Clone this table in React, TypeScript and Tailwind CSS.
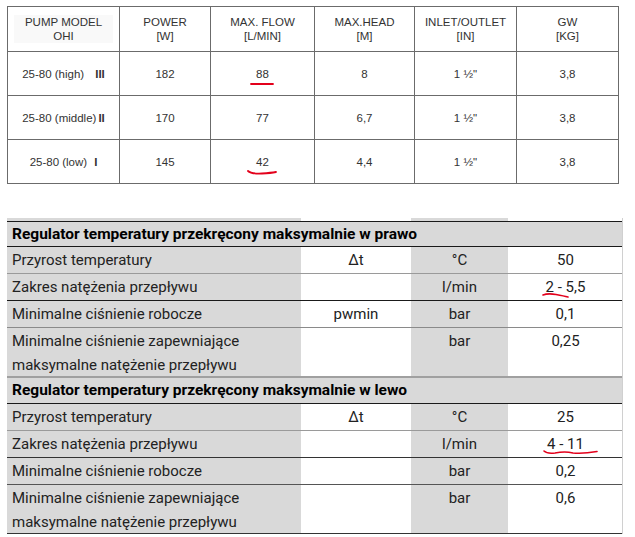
import React from 'react';

type PumpRow = { model: string; speed: string; power: string; flow: string; head: string; inlet: string; gw: string; mark?: 'straight' | 'curve' };

const pumpRows: PumpRow[] = [
  { model: '25-80 (high)', speed: 'III', power: '182', flow: '88', head: '8', inlet: '1 ½"', gw: '3,8', mark: 'straight' },
  { model: '25-80 (middle)', speed: 'II', power: '170', flow: '77', head: '6,7', inlet: '1 ½"', gw: '3,8' },
  { model: '25-80 (low)', speed: 'I', power: '145', flow: '42', head: '4,4', inlet: '1 ½"', gw: '3,8', mark: 'curve' },
];

const headers = [
  ['PUMP MODEL', 'OHI'],
  ['POWER', '[W]'],
  ['MAX. FLOW', '[L/MIN]'],
  ['MAX.HEAD', '[M]'],
  ['INLET/OUTLET', '[IN]'],
  ['GW', '[KG]'],
];

const widths = ['w-[112px]', 'w-[91px]', 'w-[104px]', 'w-[100px]', 'w-[102px]', 'w-[102px]'];

const Underline: React.FC<{ d: string; w: number }> = ({ d, w }) => (
  <svg className="absolute left-1/2 -translate-x-1/2 top-full" width={w} height="8" viewBox={`0 0 ${w} 8`}>
    <path d={d} stroke="#e3001b" strokeWidth="1.8" fill="none" strokeLinecap="round" />
  </svg>
);

const PumpTable: React.FC = () => (
  <table className="border-collapse ml-[7px] mt-[6px] text-[11.5px] text-[#333] font-['Liberation_Sans',Arial,sans-serif] leading-[14px]">
    <thead>
      <tr className="h-[45px]">
        {headers.map((h, i) => (
          <th key={i} className={`border border-[#6b6b6b] font-normal text-center align-middle ${widths[i]}`}>
            <div className={i === 0 ? 'mx-[6px] bg-[#f9f9f9]' : ''}>
              {h[0]}
              <br />
              {h[1]}
            </div>
          </th>
        ))}
      </tr>
    </thead>
    <tbody>
      {pumpRows.map((r, i) => (
        <tr key={i} className="h-[44px] text-center">
          <td className="border border-[#6b6b6b]">
            {r.model}
            <span className={i === 0 ? 'ml-[11px] font-bold' : i === 1 ? 'ml-[2px] font-bold' : 'ml-[7px] font-bold'}>{r.speed}</span>
          </td>
          <td className="border border-[#6b6b6b]">{r.power}</td>
          <td className="border border-[#6b6b6b]">
            <span className="relative inline-block">
              {r.flow}
              {r.mark === 'straight' && <Underline w={26} d="M2 3 L24 3" />}
              {r.mark === 'curve' && <Underline w={30} d="M1 2 Q4 5 15 4.5 Q24 4 29 3" />}
            </span>
          </td>
          <td className="border border-[#6b6b6b]">{r.head}</td>
          <td className="border border-[#6b6b6b]">{r.inlet}</td>
          <td className="border border-[#6b6b6b]">{r.gw}</td>
        </tr>
      ))}
    </tbody>
  </table>
);

type SpecRow = { label: string[]; sym?: string; unit: string; value: string; line: string; mark?: 'a' | 'b' };

const Row: React.FC<{ r: SpecRow }> = ({ r }) => {
  const tall = r.label.length > 1;
  return (
    <div className={`grid grid-cols-[294px_110px_97px_115px] ${r.line}`}>
      <div className={`bg-[#d9d9d9] pl-[5px] ${tall ? 'h-[48px] pt-[1px] leading-[24px]' : 'h-[26px] leading-[26px]'}`}>
        {r.label.map((l, i) => (
          <div key={i}>{l}</div>
        ))}
      </div>
      <div className={`text-center ${tall ? 'leading-[24px] pt-[1px]' : 'leading-[26px]'}`}>{r.sym}</div>
      <div className={`bg-[#d9d9d9] text-center ${tall ? 'leading-[24px] pt-[1px]' : 'leading-[26px]'}`}>{r.unit}</div>
      <div className={`text-center ${tall ? 'leading-[24px] pt-[1px]' : 'leading-[26px]'}`}>
        <span className="relative inline-block">
          {r.value}
          {r.mark === 'a' && (
            <svg className="absolute -left-[4px] top-[17px]" width="30" height="8" viewBox="0 0 30 8">
              <path d="M1 4 Q6 2 14 3.5 Q22 5 26 6" stroke="#e3001b" strokeWidth="1.6" fill="none" strokeLinecap="round" />
            </svg>
          )}
          {r.mark === 'b' && (
            <svg className="absolute -left-[4px] top-[17px]" width="56" height="8" viewBox="0 0 56 8">
              <path d="M1 3 Q4 6 12 5 Q22 3 30 5 Q40 6 54 3.5" stroke="#e3001b" strokeWidth="1.6" fill="none" strokeLinecap="round" />
            </svg>
          )}
        </span>
      </div>
    </div>
  );
};

const Section: React.FC<{ title: string; rows: SpecRow[]; top: string }> = ({ title, rows, top }) => (
  <div>
    <div className={`h-[26px] bg-[#d9d9d9] pl-[5px] text-[15.5px] font-bold leading-[24px] text-black border-b border-[#1a1a1a] ${top}`}>{title}</div>
    {rows.map((r, i) => (
      <Row key={i} r={r} />
    ))}
  </div>
);

const right: SpecRow[] = [
  { label: ['Przyrost temperatury'], sym: 'Δt', unit: '°C', value: '50', line: 'border-b border-[#9a9a9a]' },
  { label: ['Zakres natężenia przepływu'], unit: 'l/min', value: '2 - 5,5', line: 'border-b border-[#1a1a1a]', mark: 'a' },
  { label: ['Minimalne ciśnienie robocze'], sym: 'pwmin', unit: 'bar', value: '0,1', line: 'border-b border-[#8a8a8a]' },
  { label: ['Minimalne ciśnienie zapewniające', 'maksymalne natężenie przepływu'], unit: 'bar', value: '0,25', line: 'border-b-2 border-[#a0a0a0]' },
];

const left: SpecRow[] = [
  { label: ['Przyrost temperatury'], sym: 'Δt', unit: '°C', value: '25', line: 'border-b border-[#9a9a9a]' },
  { label: ['Zakres natężenia przepływu'], unit: 'l/min', value: '4 - 11', line: 'border-b border-[#333]', mark: 'b' },
  { label: ['Minimalne ciśnienie robocze'], unit: 'bar', value: '0,2', line: 'border-b border-[#555]' },
  { label: ['Minimalne ciśnienie zapewniające', 'maksymalne natężenie przepływu'], unit: 'bar', value: '0,6', line: 'border-b border-[#333]' },
];

const SpecTable: React.FC = () => (
  <div className="ml-[7px] mt-[34px] w-[616px] border-r border-[#d0d0d0] text-[15px] text-[#222] font-['Roboto','Noto_Sans',sans-serif]">
    <div className="grid grid-cols-[294px_110px_97px_115px] h-[3px]">
      <div className="bg-[#d9d9d9]" />
      <div />
      <div className="bg-[#d9d9d9]" />
      <div />
    </div>
    <Section title="Regulator temperatury przekręcony maksymalnie w prawo" rows={right} top="border-t border-[#1a1a1a]" />
    <Section title="Regulator temperatury przekręcony maksymalnie w lewo" rows={left} top="" />
  </div>
);

export default function App() {
  return (
    <div className="w-[635px] h-[537px] bg-white overflow-hidden">
      <PumpTable />
      <SpecTable />
    </div>
  );
}
